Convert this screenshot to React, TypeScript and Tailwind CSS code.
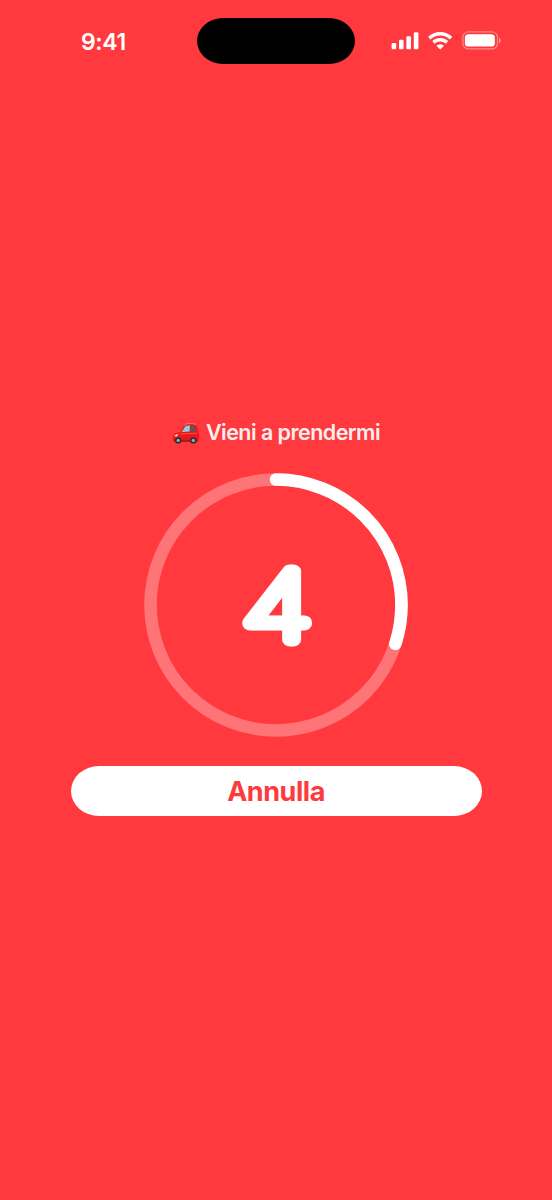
import React from 'react';

const RADIUS = 125.5;
const CIRCUMFERENCE = 2 * Math.PI * RADIUS;
const PROGRESS = 0.3;

const SignalIcon: React.FC = () => (
  <svg width="28" height="18" viewBox="0 0 28 18" fill="white">
    <rect x="0.6" y="11" width="4.6" height="6.3" rx="1.3" />
    <rect x="8" y="7.7" width="4.6" height="9.6" rx="1.3" />
    <rect x="15.4" y="4.2" width="4.6" height="13.1" rx="1.3" />
    <rect x="22.8" y="0.3" width="4.6" height="17" rx="1.3" />
  </svg>
);

const WifiIcon: React.FC = () => (
  <svg width="26" height="18" viewBox="0 0 26 18" fill="none" stroke="white">
    <path d="M2.3 6.1 A16 16 0 0 1 24.1 6.1" strokeWidth="3.5" />
    <path d="M6.4 10.4 A10 10 0 0 1 20 10.4" strokeWidth="3.5" />
    <path d="M13.2 17.5 L9.3 13.8 A5.6 5.6 0 0 1 17.1 13.8 Z" fill="white" stroke="none" />
  </svg>
);

const BatteryIcon: React.FC = () => (
  <svg width="39" height="19" viewBox="0 0 39 19">
    <rect x="0.9" y="0.9" width="34.6" height="17" rx="5.4" fill="none" stroke="white" strokeOpacity="0.4" strokeWidth="1.3" />
    <rect x="2.9" y="3.3" width="30" height="12.3" rx="3.7" fill="white" />
    <path d="M37 6.6 Q38.8 7.5 38.8 9.5 Q38.8 11.5 37 12.4 Z" fill="white" fillOpacity="0.45" />
  </svg>
);

const CarIcon: React.FC = () => (
  <svg width="28" height="24" viewBox="0 0 28 24" className="relative top-px">
    <path d="M0.8 16 Q1 12.6 5 11.8 L8.5 11 L11.8 5 Q12.8 3 15.2 2.7 Q20 2 24 3.2 Q25.2 4 25.7 7.5 L27 12.3 Q27.6 17 26.2 19.8 L22 21 L4 21 L1 19.6 Z" fill="#e8191c" />
    <path d="M12.2 4.6 Q13 2.9 16 2.7 Q21 2.2 24.2 3.5" fill="none" stroke="#ff8a80" strokeWidth="0.8" />
    <path d="M9.8 11 L13 5.8 Q13.6 4.9 15.4 4.8 L18 4.6 L17.6 10.6 Z" fill="#8fcfdd" />
    <path d="M18.9 4.6 L22 4.8 Q23.3 7 23.6 10 L18.5 10.5 Z" fill="#44606c" />
    <path d="M2 15.1 L4.5 13.2 L6.3 13.2 L5 15.4 Z" fill="#ffe0cf" />
    <path d="M8 13 L25.7 12.2" stroke="#ff5a55" strokeWidth="0.8" />
    <path d="M1.1 18.8 L26.4 18.8 L25.9 20.5 L3 20.8 Z" fill="#a81518" />
    <circle cx="6.2" cy="19.4" r="3.2" fill="#283034" />
    <circle cx="6.2" cy="19.4" r="1.7" fill="#9aa7aa" />
    <circle cx="21.3" cy="19.4" r="3.2" fill="#283034" />
    <circle cx="21.3" cy="19.4" r="1.7" fill="#9aa7aa" />
  </svg>
);

const StatusBar: React.FC = () => (
  <header className="flex h-[82px] shrink-0 items-start pl-[81px]">
    <time className="mt-[27px] w-[116px] text-[23px] font-semibold leading-[30px] tracking-[-0.4px]">9:41</time>
    <div className="mt-[18px] h-[46px] w-[158px] rounded-[26px/23px] bg-black" />
    <div className="ml-[36px] mt-[32px] flex items-start">
      <SignalIcon />
      <div className="ml-[8px]">
        <WifiIcon />
      </div>
      <div className="-mt-px ml-[9px]">
        <BatteryIcon />
      </div>
    </div>
  </header>
);

const CountdownRing: React.FC<{ seconds: number }> = ({ seconds }) => (
  <svg width="264" height="264" viewBox="0 0 264 264" className="mt-[27px]">
    <circle cx="132" cy="132" r={RADIUS} fill="none" stroke="white" strokeOpacity="0.3" strokeWidth="12.6" />
    <circle
      cx="132"
      cy="132"
      r={RADIUS}
      fill="none"
      stroke="white"
      strokeWidth="12.6"
      strokeLinecap="round"
      strokeDasharray={`${CIRCUMFERENCE * PROGRESS} ${CIRCUMFERENCE}`}
      transform="rotate(-90 132 132)"
    />
    {/* thin digit with a heavy round stroke gives the rounded numeral */}
    <text
      x="0"
      y="0"
      textAnchor="middle"
      fill="white"
      stroke="white"
      strokeWidth="12.8"
      strokeLinejoin="round"
      transform="translate(133 166.6) scale(1.26 1)"
      className="font-['Inter'] text-[95px] font-thin"
    >
      {seconds}
    </text>
  </svg>
);

export default function App() {
  return (
    <div className="flex h-[1200px] w-[552px] flex-col overflow-hidden bg-[#ff393d] font-['Inter',sans-serif] text-white">
      <StatusBar />
      <main className="flex flex-col items-center pt-[336px]">
        <div className="flex h-[28px] items-center gap-[6px]">
          <CarIcon />
          <span className="whitespace-nowrap text-[21.5px] font-semibold leading-[28px] tracking-[-0.54px] text-[#ffeeee]">
            Vieni a prendermi
          </span>
        </div>
        <CountdownRing seconds={4} />
        <button className="mt-[29px] h-[50px] w-[411px] rounded-[28px/25px] bg-white pt-px text-[27px] font-bold leading-[50px] tracking-[-0.45px] text-[#ff393d]">
          Annulla
        </button>
      </main>
    </div>
  );
}
